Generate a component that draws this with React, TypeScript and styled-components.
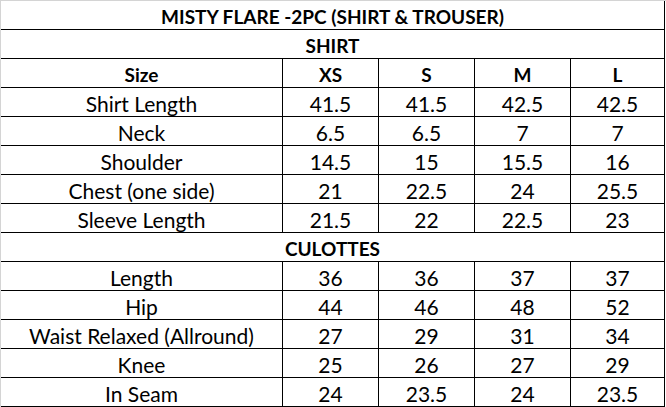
import React from 'react';
import styled, { createGlobalStyle } from 'styled-components';

const GlobalStyle = createGlobalStyle`
  html, body {
    margin: 0;
    padding: 0;
    background: #ffffff;
  }
  body {
    font-family: Lato, "Liberation Sans", sans-serif;
    color: #000;
  }
`;

const sizes = ['XS', 'S', 'M', 'L'];

const shirtRows: [string, string[]][] = [
  ['Shirt Length', ['41.5', '41.5', '42.5', '42.5']],
  ['Neck', ['6.5', '6.5', '7', '7']],
  ['Shoulder', ['14.5', '15', '15.5', '16']],
  ['Chest (one side)', ['21', '22.5', '24', '25.5']],
  ['Sleeve Length', ['21.5', '22', '22.5', '23']],
];

const culotteRows: [string, string[]][] = [
  ['Length', ['36', '36', '37', '37']],
  ['Hip', ['44', '46', '48', '52']],
  ['Waist Relaxed (Allround)', ['27', '29', '31', '34']],
  ['Knee', ['25', '26', '27', '29']],
  ['In Seam', ['24', '23.5', '24', '23.5']],
];

function App() {
  return (
    <>
      <GlobalStyle />
      <Sheet>
        <Row>
          <WideCell bold>MISTY FLARE -2PC (SHIRT &amp; TROUSER)</WideCell>
        </Row>
        <Row>
          <WideCell bold>SHIRT</WideCell>
        </Row>
        <Row>
          <Cell bold>Size</Cell>
          {sizes.map((s) => (
            <Cell bold key={s}>{s}</Cell>
          ))}
        </Row>
        {shirtRows.map(([label, vals]) => (
          <Row key={label}>
            <Cell>{label}</Cell>
            {vals.map((v, i) => (
              <Cell key={i}>{v}</Cell>
            ))}
          </Row>
        ))}
        <Row>
          <WideCell bold>CULOTTES</WideCell>
        </Row>
        {culotteRows.map(([label, vals]) => (
          <Row key={label}>
            <Cell>{label}</Cell>
            {vals.map((v, i) => (
              <Cell key={i}>{v}</Cell>
            ))}
          </Row>
        ))}
      </Sheet>
    </>
  );
}

export default App;

const Sheet = styled.div`
  width: 666px;
  height: 407px;
  box-sizing: border-box;
  border-left: 1px solid #d4d4d4;
  border-top: 1px solid #d4d4d4;
  background: #fff;
  overflow: hidden;
`;

const Row = styled.div`
  display: grid;
  grid-template-columns: 282px 96px 96px 96px 94px;
  height: 29px;
  box-sizing: border-box;
  border-bottom: 1px solid #000;
  width: 664px;
`;

const Cell = styled.div<{ bold?: boolean }>`
  display: flex;
  align-items: center;
  justify-content: center;
  box-sizing: border-box;
  border-right: 1px solid #000;
  padding-top: 2px;
  font-size: ${(p) => (p.bold ? '19px' : '21px')};
  font-weight: ${(p) => (p.bold ? 700 : 400)};
  white-space: nowrap;
`;

const WideCell = styled(Cell)`
  grid-column: 1 / -1;
`;
